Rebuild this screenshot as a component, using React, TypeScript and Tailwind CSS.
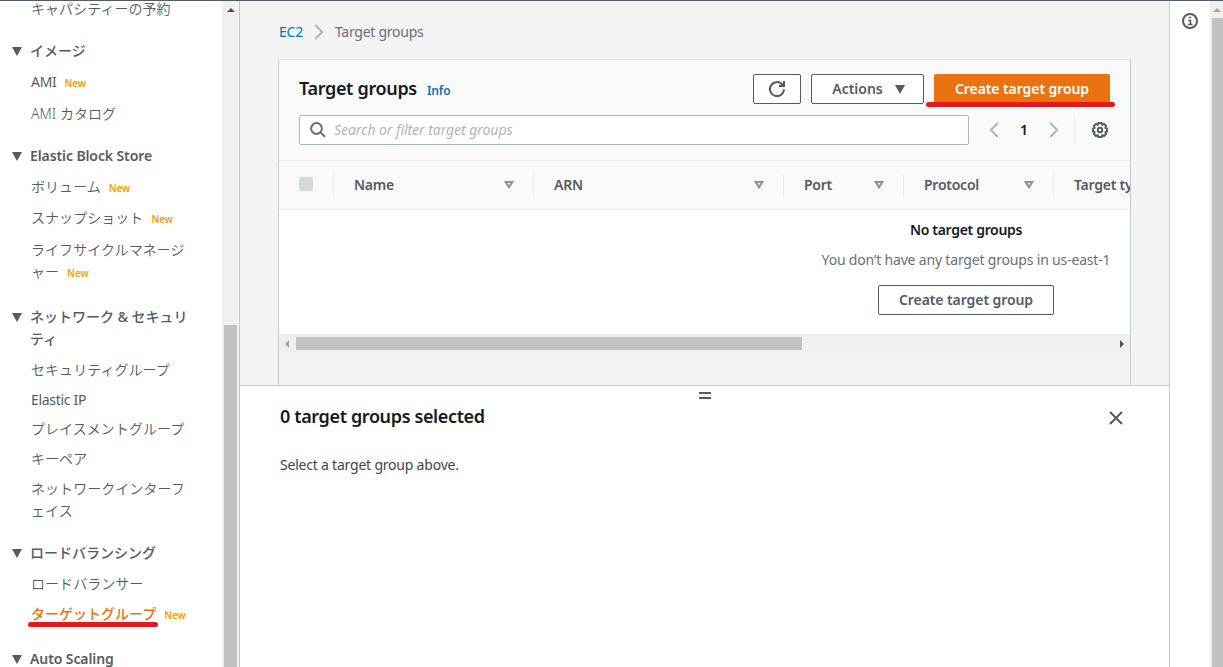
import React from 'react';
import clsx from 'clsx';

interface NavEntry {
  lines: string[];
  spacing: string;
  heading?: boolean;
  latin?: boolean;
  isNew?: boolean;
  active?: boolean;
}

interface Column {
  label: string;
  width: string;
}

const navEntries: NavEntry[] = [
  { lines: ['キャパシティーの予約'], spacing: '-mt-[3px]' },
  { lines: ['イメージ'], spacing: 'mt-5', heading: true },
  { lines: ['AMI'], spacing: 'mt-[9px]', latin: true, isNew: true },
  { lines: ['AMI カタログ'], spacing: 'mt-2.5' },
  { lines: ['Elastic Block Store'], spacing: 'mt-5', heading: true, latin: true },
  { lines: ['ボリューム'], spacing: 'mt-[9px]', isNew: true },
  { lines: ['スナップショット'], spacing: 'mt-[9px]', isNew: true },
  { lines: ['ライフサイクルマネージ', 'ャー'], spacing: 'mt-2.5', isNew: true },
  { lines: ['ネットワーク & セキュリ', 'ティ'], spacing: 'mt-[23px]', heading: true },
  { lines: ['セキュリティグループ'], spacing: 'mt-[9px]' },
  { lines: ['Elastic IP'], spacing: 'mt-2', latin: true },
  { lines: ['プレイスメントグループ'], spacing: 'mt-[7px]' },
  { lines: ['キーペア'], spacing: 'mt-2' },
  { lines: ['ネットワークインターフ', 'ェイス'], spacing: 'mt-2' },
  { lines: ['ロードバランシング'], spacing: 'mt-5', heading: true },
  { lines: ['ロードバランサー'], spacing: 'mt-[9px]' },
  { lines: ['ターゲットグループ'], spacing: 'mt-2', isNew: true, active: true },
  { lines: ['Auto Scaling'], spacing: 'mt-[23px]', heading: true, latin: true },
];

const columns: Column[] = [
  { label: 'Name', width: 'w-[200px]' },
  { label: 'ARN', width: 'w-[250px]' },
  { label: 'Port', width: 'w-[120px]' },
  { label: 'Protocol', width: 'w-[150px]' },
  { label: 'Target type', width: 'w-[200px]' },
];

const CaretDown = ({ className }: { className?: string }) => (
  <svg viewBox="0 0 10 9" className={clsx('h-[9px] w-2.5 shrink-0', className)}>
    <path d="M0 0h10L5 9z" fill="#545b64" />
  </svg>
);

const Chevron = ({ flip }: { flip?: boolean }) => (
  <svg viewBox="0 0 10 16" className={clsx('h-4 w-2.5 shrink-0', flip && '-scale-x-100')}>
    <path d="M1.2 1l7 7-7 7" fill="none" stroke="#aab7b8" strokeWidth="2" />
  </svg>
);

const entryWeight = (entry: NavEntry) => {
  if (entry.latin) return entry.heading ? 'font-semibold tracking-[-0.1px]' : 'tracking-[-0.3px]';
  return entry.heading || entry.active ? 'font-medium' : 'font-[350] tracking-[0.05px]';
};

const SideNav = () => (
  <nav className="flex w-[240px] shrink-0 border-r border-[#c4c8c8] bg-white" lang="ja">
    <div className="flex w-[222px] shrink-0 flex-col overflow-hidden">
      {navEntries.map((entry) => (
        <div
          key={entry.lines[0]}
          className={clsx(
            'flex shrink-0 items-start pl-3 text-sm leading-[22px] text-[#545b64]',
            entry.spacing
          )}
        >
          <span className="w-[18px] shrink-0">
            {entry.heading && <CaretDown className="mt-[7px]" />}
          </span>
          <div
            className={clsx(
              'relative whitespace-nowrap',
              !entry.heading && 'pl-px',
              entryWeight(entry),
              entry.active && 'text-[#ec7211]'
            )}
          >
            {entry.lines.map((line, index) => (
              <div key={line} className="flex h-[22px]">
                {line}
                {entry.isNew && index === entry.lines.length - 1 && (
                  <span className="ml-2 mt-px text-[10px] font-semibold tracking-[-0.15px] text-[#ff9900]">New</span>
                )}
              </div>
            ))}
            {entry.active && (
              <span className="absolute -left-[2px] top-[19px] h-[5px] w-[130px] rounded-full bg-[#e7191c]" />
            )}
          </div>
        </div>
      ))}
    </div>
    <div className="flex w-[17px] flex-col items-center bg-[#f0f0f0]">
      <svg viewBox="0 0 8 4" className="mt-[7px] h-1 w-2">
        <path d="M4 0l4 4H0z" fill="#505050" />
      </svg>
      <div className="mt-[313px] w-[13px] grow bg-[#c1c1c1]" />
    </div>
  </nav>
);

const TargetGroupsCard = () => (
  <section className="ml-[38px] mt-[11px] flex w-[853px] grow flex-col border-x border-t border-x-[#c6cbcb] border-t-[#e4e7e7]">
    <div className="h-[101px] border-b border-[#eaeded] bg-[#fafafa] px-5 pt-3.5">
      <div className="flex items-center">
        <h1 className="-mt-0.5 text-lg font-semibold leading-7 tracking-[-0.33px] text-[#16191f]">Target groups</h1>
        <a className="ml-2.5 mt-1 text-xs font-semibold tracking-[-0.1px] text-[#0073bb]">Info</a>
        <div className="ml-auto flex gap-2.5 text-sm font-semibold text-[#545b64]">
          <button className="flex h-[30px] w-12 items-center justify-center rounded-xs border border-[#545b64] bg-white">
            <svg viewBox="0 0 16 16" className="h-4 w-4" fill="none" stroke="#545b64" strokeWidth="2">
              <path d="M15 8.300A7 7 0 1 1 12.800 3l1.700 1.600" />
              <path d="M15 0v5h-5" />
            </svg>
          </button>
          <button className="flex h-[30px] w-[113px] items-center justify-center gap-3 rounded-xs border border-[#545b64] bg-white pl-0.5">
            Actions
            <CaretDown />
          </button>
          <button className="relative h-[30px] w-[176px] rounded-xs bg-[#ec7211] tracking-[-0.08px] text-white">
            Create target group
            <span className="absolute -left-2 top-7 h-[5px] w-[189px] rounded-full bg-[#e7191c]" />
          </button>
        </div>
      </div>
      <div className="mt-[11px] flex items-center">
        <div className="flex h-[30px] w-[670px] items-center rounded-xs border border-[#aab7b8] bg-white pl-2.5">
          <svg viewBox="0 0 16 16" className="h-4 w-4" fill="none" stroke="#687078" strokeWidth="2">
            <circle cx="6.5" cy="6.5" r="5.4" />
            <path d="M10.4 10.4l4.6 4.4" />
          </svg>
          <span className="ml-2 text-sm italic tracking-[-0.05px] text-[#aab7b8]">
            Search or filter target groups
          </span>
        </div>
        <div className="ml-5 flex items-center">
          <Chevron flip />
          <span className="w-[50px] text-center text-sm font-semibold text-[#16191f]">1</span>
          <Chevron />
        </div>
        <span className="ml-[15px] h-[30px] w-px bg-[#eaeded]" />
        <svg viewBox="0 0 16 16" className="ml-[17px] h-4 w-4" fill="none" stroke="#545b64" strokeWidth="2">
          <path d="M6.4 1h3.2l.7 1.7 1.8-.7 2 2-.7 1.8 1.6.7v3l-1.6.7.7 1.8-2 2-1.8-.7-.7 1.7H6.4l-.7-1.7-1.8.7-2-2 .7-1.8L1 9.500v-3l1.600-.7L1.900 4l2-2 1.800.7z" />
          <circle cx="8" cy="8" r="2.2" />
        </svg>
      </div>
    </div>
    <div className="overflow-hidden bg-white">
      {/* the table is wider than the card and gets clipped on the right */}
      <div className="w-[1374px]">
        <div className="flex h-[49px] items-center border-b border-[#eaeded] bg-[#fafafa] text-sm font-semibold tracking-[-0.25px] text-[#545b64]">
          <div className="flex h-6 w-[55px] shrink-0 items-center border-r border-[#eaeded] pl-5">
            <span className="-mt-0.5 h-3.5 w-3.5 rounded-xs bg-[#d5dbdb]" />
          </div>
          {columns.map((column) => (
            <div
              key={column.label}
              className={clsx(
                'flex h-6 shrink-0 items-center justify-between border-r border-[#eaeded] pl-5 pr-[19px]',
                column.width
              )}
            >
              {column.label}
              <svg viewBox="0 0 10 8" className="h-2 w-2.5" fill="none" stroke="#879596" strokeWidth="2">
                <path d="M1.700 1h6.600L5 6.300z" />
              </svg>
            </div>
          ))}
        </div>
        <div className="flex h-[124px] flex-col items-center pt-[9px] text-sm">
          <p className="font-semibold leading-[22px] tracking-[-0.32px] text-[#16191f]">No target groups</p>
          <p className="mt-2 leading-[22px] tracking-[-0.18px] text-[#687078]">
            You don’t have any target groups in us-east-1
          </p>
          <button className="mt-3.5 h-[30px] w-[176px] rounded-xs border border-[#545b64] font-semibold tracking-[-0.08px] text-[#545b64]">
            Create target group
          </button>
        </div>
      </div>
    </div>
    <div className="flex h-[18px] items-center border-t border-[#eaeaea] bg-[#f0f0f0] px-1.5">
      <svg viewBox="0 0 4 8" className="h-2 w-1">
        <path d="M4 0v8L0 4z" fill="#a3a3a3" />
      </svg>
      <div className="ml-[7px] h-[13px] w-[506px] bg-[#c1c1c1]" />
      <svg viewBox="0 0 4 8" className="ml-auto h-2 w-1">
        <path d="M0 0v8l4-4z" fill="#505050" />
      </svg>
    </div>
  </section>
);

const SplitPanel = () => (
  <section className="h-[282px] shrink-0 border-t border-[#c6cbcb] bg-white pl-10 pr-[46px]">
    <div className="-ml-10 -mr-[46px] flex flex-col items-center gap-[3px] pt-[6px]">
      <span className="h-0.5 w-3 bg-[#545b64]" />
      <span className="h-0.5 w-3 bg-[#545b64]" />
    </div>
    <div className="mt-1.5 flex items-center justify-between">
      <h2 className="text-lg font-semibold leading-[22px] tracking-[-0.37px] text-[#16191f]">
        0 target groups selected
      </h2>
      <svg viewBox="0 0 14 14" className="mt-[3px] h-3.5 w-3.5" fill="none" stroke="#545b64" strokeWidth="2">
        <path d="M1 1l12 12M13 1L1 13" />
      </svg>
    </div>
    <p className="mt-[27px] text-sm leading-[22px] tracking-[-0.21px] text-[#3f444c]">Select a target group above.</p>
  </section>
);

const App: React.FC = () => {
  return (
    <div className="flex h-[667px] w-[1223px] overflow-hidden border-t border-[#545b64] bg-[#f2f3f3] font-['Noto_Sans','Noto_Sans_CJK_JP',sans-serif]">
      <SideNav />
      <main className="flex w-[930px] shrink-0 flex-col border-r border-[#c6cbcb]">
        <div className="flex h-[47px] shrink-0 items-end pl-[39px] text-sm">
          <div className="flex h-8 items-center tracking-[-0.25px]">
            <a className="text-[#0073bb]">EC2</a>
            <span className="ml-[11px] mr-[11px] flex">
              <Chevron />
            </span>
            <span className="text-[#687078]">Target groups</span>
          </div>
        </div>
        <TargetGroupsCard />
        <SplitPanel />
      </main>
      <aside className="flex w-10 shrink-0 justify-center bg-white pt-3">
        <svg viewBox="0 0 16 16" className="h-4 w-4" fill="none" stroke="#545b64" strokeWidth="2">
          <circle cx="8" cy="8" r="7" />
          <path d="M6.200 7.500H8.500V11M6 11.500h4.500M7 4.500h2" strokeWidth="1.600" />
        </svg>
      </aside>
      <div className="flex w-[13px] shrink-0 flex-col items-end bg-[#f0f0f0]">
        <svg viewBox="0 0 8 4" className="mr-0.5 mt-[7px] h-1 w-2">
          <path d="M4 0l4 4H0z" fill="#a3a3a3" />
        </svg>
        <div className="mt-[6px] w-[11px] grow bg-[#c1c1c1]" />
      </div>
    </div>
  );
};

export default App;
